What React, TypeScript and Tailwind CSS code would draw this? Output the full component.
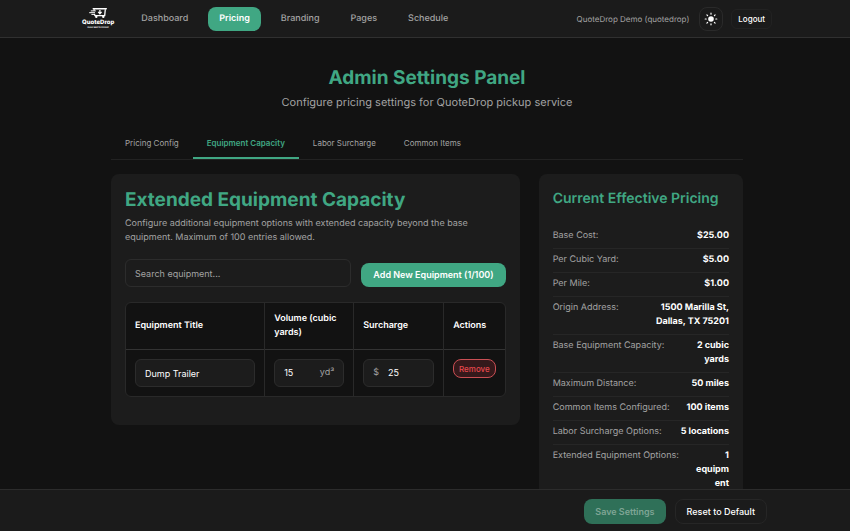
import { useState } from 'react';
import clsx from 'clsx';

const navLinks = ['Dashboard', 'Pricing', 'Branding', 'Pages', 'Schedule'];
const tabs = ['Pricing Config', 'Equipment Capacity', 'Labor Surcharge', 'Common Items'];

interface PricingRow {
  label: string;
  value: string;
}

const pricingRows: PricingRow[] = [
  { label: 'Base Cost:', value: '$25.00' },
  { label: 'Per Cubic Yard:', value: '$5.00' },
  { label: 'Per Mile:', value: '$1.00' },
  { label: 'Origin Address:', value: '1500 Marilla St, Dallas, TX 75201' },
  { label: 'Base Equipment Capacity:', value: '2 cubic yards' },
  { label: 'Maximum Distance:', value: '50 miles' },
  { label: 'Common Items Configured:', value: '100 items' },
  { label: 'Labor Surcharge Options:', value: '5 locations' },
  { label: 'Extended Equipment Options:', value: '1 equipment' },
];

function Logo() {
  return (
    <a href="#" aria-label="QuoteDrop home" className="flex flex-col items-center text-white">
      <svg className="h-2.5 w-[18px]" viewBox="0 0 18 10" fill="none" stroke="currentColor">
        <path d="M4.200.8H17.300" strokeWidth="1.400" strokeLinecap="round" />
        <path d="M16.300 1.200 15.700 7.600H5.900L5.500 5.800M5.200 2.600 5.100 1.200" strokeWidth="1.300" strokeLinejoin="round" />
        <path d="M2.200 2.900h4.200M.6 4.700h5M2.800 6.400h2.800" strokeWidth="1" strokeLinecap="round" />
        <path d="M10.900 2v3.400M9.200 3.900l1.700 1.800 1.700-1.800" strokeWidth="1.300" />
        <circle cx="7.300" cy="8.700" r="1.200" fill="currentColor" stroke="none" />
        <circle cx="14.300" cy="8.700" r="1.200" fill="currentColor" stroke="none" />
      </svg>
      <span className="text-[6px] leading-[9px] font-extrabold">QuoteDrop</span>
      <span className="text-[2px] leading-[3px] font-bold">BULK WASTE PICKUP</span>
    </a>
  );
}

function SunIcon() {
  return (
    <svg className="h-3.5 w-3.5" viewBox="0 0 14 14" fill="currentColor" stroke="currentColor">
      <circle cx="7" cy="7" r="2.800" stroke="none" />
      <path
        d="M7 1.200v1M7 11.800v1M1.200 7h1M11.800 7h1M2.900 2.900l.7.700M10.400 10.400l.7.700M2.900 11.100l.7-.7M10.400 3.600l.7-.7"
        strokeWidth="1.200"
        strokeLinecap="round"
      />
    </svg>
  );
}

function Header() {
  return (
    <header className="shrink-0 border-b border-[#303030] bg-[#1b1b1b] pl-1">
      <div className="mx-auto flex h-[37px] max-w-[690px] items-center">
        <Logo />
        <nav className="ml-4 flex items-center gap-[9px]">
          {navLinks.map((link) => (
            <a
              key={link}
              href="#"
              className={clsx(
                'flex h-6 items-center rounded-lg px-[11px] text-[9px]',
                link === 'Pricing' ? 'bg-[#40a783] font-semibold text-white' : 'font-medium text-[#a3a3a3]'
              )}
            >
              {link}
            </a>
          ))}
        </nav>
        <span className="ml-auto text-[8px] text-[#a3a3a3]">QuoteDrop Demo (quotedrop)</span>
        <button
          type="button"
          aria-label="Toggle theme"
          className="ml-2.5 flex h-6 w-6 items-center justify-center rounded-lg border border-[#2a2a2a] text-white"
        >
          <SunIcon />
        </button>
        <button
          type="button"
          className="ml-2 h-5 rounded-md border border-[#222] px-1.5 text-[8px] font-medium text-white"
        >
          Logout
        </button>
      </div>
    </header>
  );
}

function EquipmentPanel() {
  const [search, setSearch] = useState('');
  const [title, setTitle] = useState('Dump Trailer');
  const [volume, setVolume] = useState('15');
  const [surcharge, setSurcharge] = useState('25');

  return (
    <section className="rounded-lg bg-[#1c1c1c] px-3.5 pt-3.5 pb-7">
      <h2 className="text-[19px] leading-6 font-bold text-[#40a783]">Extended Equipment Capacity</h2>
      <p className="mt-[5px] text-[9px] leading-[14px] text-[#a3a3a3]">
        Configure additional equipment options with extended capacity beyond the base equipment. Maximum of 100
        entries allowed.
      </p>

      <div className="mt-3.5 flex items-end gap-2.5">
        <input
          type="text"
          aria-label="Search equipment"
          placeholder="Search equipment..."
          value={search}
          onChange={(e) => setSearch(e.target.value)}
          className="h-7 min-w-0 flex-1 rounded-md border border-[#2c2c2c] px-[9px] text-[9px] text-white outline-none placeholder:text-[#a3a3a3]"
        />
        <button
          type="button"
          className="h-6 shrink-0 rounded-lg bg-[#40a783] px-3 text-[9px] font-semibold text-white"
        >
          Add New Equipment (1/100)
        </button>
      </div>

      {/* Equipment table */}
      <div className="mt-[15px] overflow-hidden rounded-md border border-[#292929] bg-[#121212]">
        <table className="w-full table-fixed border-collapse text-left text-[9px] text-white">
          <colgroup>
            <col />
            <col className="w-[89px]" />
            <col className="w-[90px]" />
            <col className="w-[61px]" />
          </colgroup>
          <thead>
            <tr className="border-b border-[#333] leading-[14px]">
              <th className="border-r border-[#292929] px-[9px] py-[9px] font-semibold">Equipment Title</th>
              <th className="border-r border-[#292929] px-[9px] py-[9px] font-semibold">Volume (cubic yards)</th>
              <th className="border-r border-[#292929] px-[9px] py-[9px] font-semibold">Surcharge</th>
              <th className="px-[9px] py-[9px] font-semibold">Actions</th>
            </tr>
          </thead>
          <tbody>
            <tr className="align-top">
              <td className="border-r border-[#292929] px-[9px] py-[9px]">
                <input
                  type="text"
                  aria-label="Equipment title"
                  value={title}
                  onChange={(e) => setTitle(e.target.value)}
                  className="block h-7 w-full rounded-md border border-[#2c2c2c] bg-[#1c1c1c] px-[9px] outline-none"
                />
              </td>
              <td className="border-r border-[#292929] px-[9px] py-[9px]">
                <label className="flex h-7 items-center rounded-md border border-[#2c2c2c] bg-[#1c1c1c] px-[9px]">
                  <input
                    type="text"
                    aria-label="Volume in cubic yards"
                    value={volume}
                    onChange={(e) => setVolume(e.target.value)}
                    className="w-0 flex-1 outline-none"
                  />
                  <span className="text-[#a3a3a3]">yd³</span>
                </label>
              </td>
              <td className="border-r border-[#292929] px-[9px] py-[9px]">
                <label className="flex h-7 items-center gap-[9px] rounded-md border border-[#2c2c2c] bg-[#1c1c1c] px-[9px]">
                  <span className="text-[#a3a3a3]">$</span>
                  <input
                    type="text"
                    aria-label="Surcharge"
                    value={surcharge}
                    onChange={(e) => setSurcharge(e.target.value)}
                    className="w-0 flex-1 outline-none"
                  />
                </label>
              </td>
              <td className="px-[9px] py-[9px]">
                <button
                  type="button"
                  className="block h-[19px] w-full rounded-lg border border-[#c94f54] bg-[#35191b] text-[8px] font-medium text-[#e5484d]"
                >
                  Remove
                </button>
              </td>
            </tr>
          </tbody>
        </table>
      </div>
    </section>
  );
}

function PricingSummary() {
  return (
    <aside className="rounded-lg bg-[#1c1c1c] p-3.5">
      <h3 className="text-[14px] leading-[22px] font-semibold text-[#40a783]">Current Effective Pricing</h3>
      <dl className="mt-[15px] text-[9px] leading-[14px]">
        {pricingRows.map(({ label, value }) => (
          <div key={label} className="flex justify-between border-b border-[#262626] pt-1 pb-[5px]">
            <dt className="shrink-0 text-[#a3a3a3]">{label}</dt>
            <dd className="ml-3.5 min-w-0 text-right font-bold wrap-anywhere text-white">{value}</dd>
          </div>
        ))}
      </dl>
    </aside>
  );
}

export default function App() {
  const [activeTab, setActiveTab] = useState('Equipment Capacity');

  return (
    <div className="flex h-screen flex-col bg-[#121212] font-[Inter,sans-serif] antialiased [text-rendering:geometricPrecision]">
      <Header />

      <main className="min-h-0 flex-1 overflow-y-auto pb-6 pl-1 [scrollbar-width:none]">
        <div className="mx-auto max-w-[632px]">
          <div className="pt-7 text-center">
            <h1 className="text-[19px] leading-6 font-bold text-[#40a783]">Admin Settings Panel</h1>
            <p className="mt-1 text-[11px] leading-4 text-[#a3a3a3]">
              Configure pricing settings for QuoteDrop pickup service
            </p>
          </div>

          <div role="tablist" className="mt-[19px] flex border-b border-[#222]">
            {tabs.map((tab) => (
              <button
                key={tab}
                type="button"
                role="tab"
                aria-selected={activeTab === tab}
                onClick={() => setActiveTab(tab)}
                className={clsx(
                  'h-[30px] border-b-2 px-3.5 text-[8px]',
                  activeTab === tab
                    ? 'border-[#40a783] font-semibold text-[#40a783]'
                    : 'border-transparent text-[#a3a3a3]'
                )}
              >
                {tab}
              </button>
            ))}
          </div>

          <div className="mt-3.5 grid grid-cols-[2fr_1fr] items-start gap-[19px]">
            <EquipmentPanel />
            <PricingSummary />
          </div>
        </div>
      </main>

      {/* Save bar */}
      <footer className="shrink-0 border-t border-[#2c2c2c] bg-[#1b1b1b] pl-1">
        <div className="mx-auto flex max-w-[680px] justify-end gap-[9px] pt-[9px] pb-[7px]">
          <button
            type="button"
            disabled
            className="h-[25px] rounded-lg bg-[#2f7058] px-[11px] text-[9px] font-semibold text-[#7fa595]"
          >
            Save Settings
          </button>
          <button
            type="button"
            className="h-[25px] rounded-lg border border-[#262626] px-[11px] text-[9px] font-medium text-white"
          >
            Reset to Default
          </button>
        </div>
      </footer>
    </div>
  );
}
